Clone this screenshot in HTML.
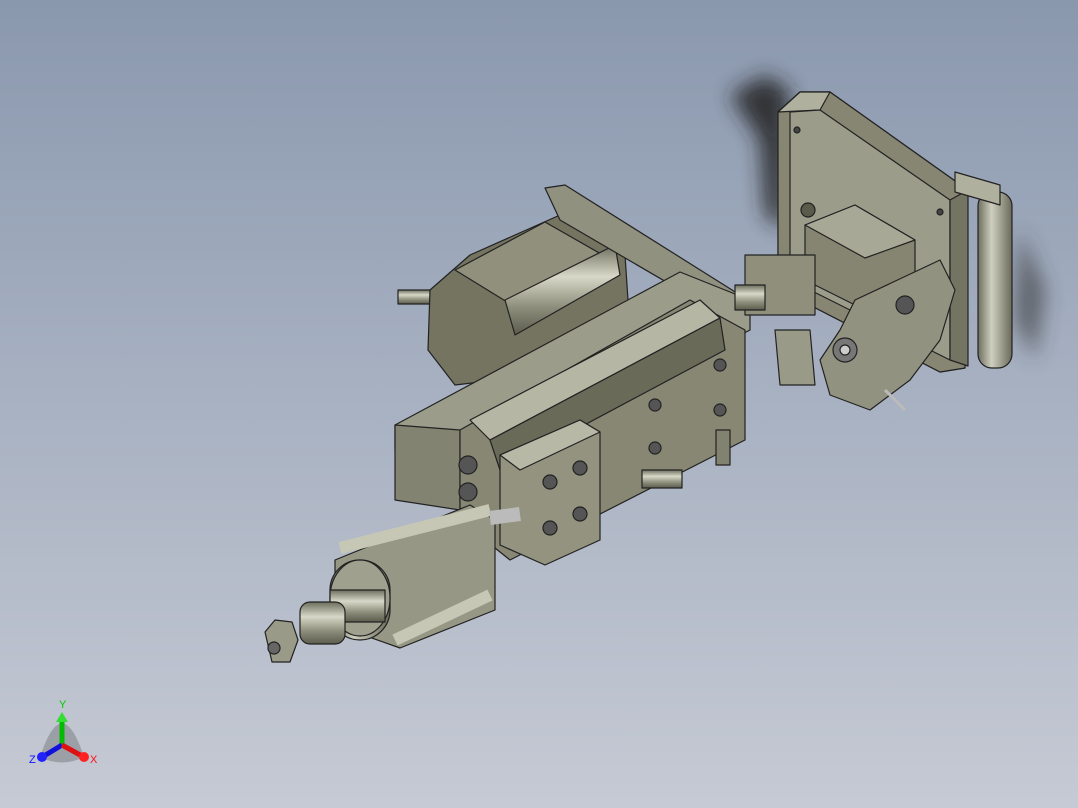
<!DOCTYPE html>
<html><head><style>
html,body{margin:0;padding:0}
body{width:1078px;height:808px;overflow:hidden;background:linear-gradient(to bottom,#8a98ae 0%,#a5afc0 45%,#c6cad4 100%);font-family:"Liberation Sans",sans-serif}
</style></head><body>
<svg width="1078" height="808" viewBox="0 0 1078 808" xmlns="http://www.w3.org/2000/svg" style="position:absolute;left:0;top:0">
<defs>
<filter id="b" x="-100%" y="-100%" width="300%" height="300%"><feGaussianBlur stdDeviation="10"/></filter>
<linearGradient id="cyl" x1="0" y1="0" x2="0" y2="1"><stop offset="0" stop-color="#6e6e5e"/><stop offset=".35" stop-color="#d8d8c8"/><stop offset=".7" stop-color="#8c8c7a"/><stop offset="1" stop-color="#5c5c4e"/></linearGradient>
<linearGradient id="hin" x1="0" y1="0" x2="1" y2="0"><stop offset="0" stop-color="#6e6e5e"/><stop offset=".4" stop-color="#cfcfbf"/><stop offset="1" stop-color="#6a6a5a"/></linearGradient>
</defs>
<path d="M730 95 L765 75 L790 90 L785 230 L765 215 L760 140 Z" fill="#222" filter="url(#b)" opacity=".85"/>
<path d="M1020 230 L1045 290 L1035 360 L1015 320Z" fill="#333" filter="url(#b)" opacity=".6"/>
<g stroke="#222" stroke-width="1.2" stroke-linejoin="round">
<!-- back plate -->
<polygon points="778,112 800,92 830,92 965,188 965,368 940,372 800,300 778,280" fill="#86867340"/>
<polygon points="778,112 800,92 830,92 965,188 965,368 940,372 800,300 778,280" fill="#868673"/>
<polygon points="778,112 800,92 830,92 820,110" fill="#b0b09e"/>
<polygon points="790,112 820,110 950,200 950,360 800,285 790,270" fill="#9c9c8a"/>
<polygon points="950,200 968,190 968,366 950,360" fill="#747462"/>
<rect x="978" y="192" width="34" height="176" rx="14" fill="url(#hin)"/>
<polygon points="955,172 1000,185 1000,205 955,192" fill="#b0b09e"/>
<circle cx="808" cy="210" r="7" fill="#5b5b4c"/>
<circle cx="797" cy="130" r="3" fill="#444"/><circle cx="940" cy="212" r="3" fill="#444"/>
<polygon points="805,225 855,205 915,240 915,290 865,310 805,280" fill="#858572"/>
<polygon points="805,225 855,205 915,240 865,258" fill="#a8a896"/>
<polygon points="855,300 940,260 955,290 940,340 910,380 870,410 830,395 820,360 840,330" fill="#929280"/>
<circle cx="905" cy="305" r="9" fill="#555"/>
<circle cx="845" cy="350" r="12" fill="#777"/><circle cx="845" cy="350" r="5" fill="#ccc"/>
<line x1="885" y1="390" x2="905" y2="410" stroke="#bbb" stroke-width="3"/>
<!-- motor -->
<rect x="398" y="290" width="35" height="14" fill="url(#cyl)"/>
<polygon points="430,290 470,255 560,215 625,255 630,330 540,375 455,385 428,350" fill="#747461"/>
<polygon points="455,270 545,222 615,262 520,310" fill="#90907d"/>
<polygon points="505,300 615,245 620,275 515,335" fill="url(#cyl)"/>
<polygon points="545,188 565,185 740,295 740,325 560,220" fill="#919180"/>
<!-- main beam -->
<polygon points="395,425 680,272 750,300 750,330 460,480 395,450" fill="#9c9c8a"/>
<polygon points="395,425 460,430 460,510 395,500" fill="#838371"/>
<polygon points="460,430 690,300 745,330 745,440 510,560 460,520" fill="#878774"/>
<polygon points="470,420 700,300 720,318 490,440" fill="#b6b6a4"/>
<polygon points="490,440 720,318 725,350 500,470" fill="#6a6a59"/>
<polygon points="500,455 580,420 600,432 600,540 545,565 500,545" fill="#93937f"/>
<polygon points="500,455 580,420 600,432 520,470" fill="#b8b8a6"/>
<circle cx="550" cy="482" r="7" fill="#555"/><circle cx="580" cy="468" r="7" fill="#555"/>
<circle cx="550" cy="528" r="7" fill="#555"/><circle cx="580" cy="514" r="7" fill="#555"/>
<circle cx="655" cy="405" r="6" fill="#555"/><circle cx="720" cy="410" r="6" fill="#555"/>
<circle cx="655" cy="448" r="6" fill="#555"/><circle cx="720" cy="365" r="6" fill="#555"/>
<circle cx="468" cy="465" r="9" fill="#555"/><circle cx="468" cy="492" r="9" fill="#555"/>
<rect x="745" y="255" width="70" height="60" fill="#8f8f7c"/>
<rect x="735" y="285" width="30" height="25" fill="url(#cyl)"/>
<polygon points="775,330 810,330 815,385 780,385" fill="#9a9a88"/>
<rect x="642" y="470" width="40" height="18" fill="url(#cyl)"/>
<rect x="716" y="430" width="14" height="35" fill="#828270"/>
<!-- cylinder -->
<polygon points="335,560 470,505 495,520 495,610 400,648 335,625" fill="#979785"/>
<rect x="330" y="560" width="60" height="80" rx="30" fill="url(#hin)"/>
<ellipse cx="360" cy="598" rx="30" ry="38" fill="#a0a08e"/>
<line x1="340" y1="548" x2="490" y2="510" stroke-width="12" stroke="#c7c7b5"/>
<line x1="395" y1="640" x2="490" y2="595" stroke-width="12" stroke="#c7c7b5"/>
<line x1="490" y1="518" x2="520" y2="514" stroke-width="14" stroke="#bbb"/>
<rect x="330" y="590" width="55" height="32" fill="url(#cyl)"/>
<rect x="300" y="602" width="45" height="42" rx="10" fill="url(#cyl)"/>
<polygon points="265,632 275,620 292,622 298,640 290,662 272,662" fill="#9a9a88"/>
<circle cx="274" cy="648" r="6" fill="#666"/>
</g>
<g>
<path d="M40 757 Q62 690 84 757 Q62 768 40 757Z" fill="#555" opacity=".35"/>
<line x1="62" y1="745" x2="62" y2="722" stroke="#0b0" stroke-width="5"/>
<polygon points="56,722 68,722 62,712" fill="#3d3"/>
<line x1="62" y1="745" x2="44" y2="756" stroke="#11d" stroke-width="5"/>
<circle cx="42" cy="757" r="5" fill="#22f"/>
<line x1="62" y1="745" x2="82" y2="756" stroke="#d11" stroke-width="5"/>
<circle cx="84" cy="757" r="5" fill="#f22"/>
<text x="59" y="708" font-size="11" fill="#0c0">Y</text>
<text x="29" y="763" font-size="11" fill="#11f">Z</text>
<text x="90" y="763" font-size="11" fill="#f11">X</text>
</g>
</svg>
</body></html>
